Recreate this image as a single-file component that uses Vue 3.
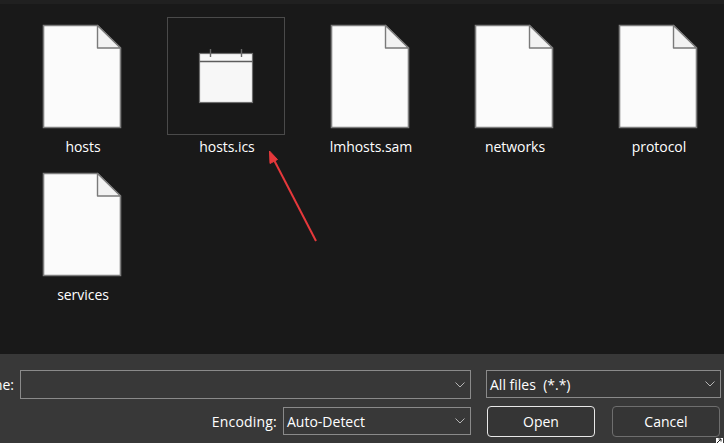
<script setup>
const files = [
  { name: 'hosts', kind: 'doc' },
  { name: 'hosts.ics', kind: 'cal', selected: true },
  { name: 'lmhosts.sam', kind: 'doc' },
  { name: 'networks', kind: 'doc' },
  { name: 'protocol', kind: 'doc' },
  { name: 'services', kind: 'doc' },
]
</script>

<template>
  <div class="dialog">
    <div class="topstrip"></div>
    <main class="grid">
      <div v-for="f in files" :key="f.name" class="item">
        <div class="thumb" :class="{ selected: f.selected }">
          <svg v-if="f.kind === 'doc'" width="80" height="105" viewBox="0 0 80 105">
            <path d="M1.500 1.500H55.500L78.500 24V103.500H1.500Z" fill="#fbfbfb" stroke="#7d7d7d" stroke-width="1.600" />
            <path d="M55.500 1.500V24H78.500Z" fill="#f2f2f2" stroke="#7a7a7a" stroke-width="1.400" stroke-linejoin="round" />
          </svg>
          <svg v-else width="56" height="56" viewBox="0 0 56 56">
            <rect x="1.500" y="5.500" width="53" height="49" fill="#f7f7f7" stroke="#6d6d6d" stroke-width="1.200" />
            <path d="M1.500 13.500H54.500" stroke="#5d5d5d" stroke-width="1.400" />
            <path d="M12.500 1V9M43.500 1V9" stroke="#666" stroke-width="1.400" />
          </svg>
        </div>
        <div class="label">{{ f.name }}</div>
      </div>
    </main>
    <footer class="footer">
      <div class="row first">
        <span class="caption">File name:</span>
        <div class="combo name">
          <svg class="chev" width="10" height="6" viewBox="0 0 10 6"><path d="M0.500 0.500L5 5L9.500 0.500" fill="none" stroke="#b5b5b5" /></svg>
        </div>
        <div class="combo type">
          <span>All files&nbsp; (*.*)</span>
          <svg class="chev" width="10" height="6" viewBox="0 0 10 6"><path d="M0.500 0.500L5 5L9.500 0.500" fill="none" stroke="#b5b5b5" /></svg>
        </div>
      </div>
      <div class="row second">
        <span class="caption">Encoding:</span>
        <div class="combo enc">
          <span>Auto-Detect</span>
          <svg class="chev" width="10" height="6" viewBox="0 0 10 6"><path d="M0.500 0.500L5 5L9.500 0.500" fill="none" stroke="#b5b5b5" /></svg>
        </div>
        <button class="btn primary">Open</button>
        <button class="btn">Cancel</button>
      </div>
    </footer>
    <svg class="arrow" width="724" height="443" viewBox="0 0 724 443">
      <path d="M316 241L274 160" stroke="#e5383b" stroke-width="2" fill="none" />
      <path d="M269.500 151L277.500 159.500L270 163.500Z" fill="#e5383b" stroke="#e5383b" />
    </svg>
    <svg class="grip" width="7" height="5" viewBox="0 0 7 5">
      <rect width="7" height="5" fill="#fff" />
      <path d="M1 5L5 1M2.500 1H5V3.500" fill="none" stroke="#222" />
    </svg>
  </div>
</template>

<style scoped>
.dialog {
  position: relative;
  width: 724px;
  height: 443px;
  overflow: hidden;
  display: flex;
  flex-direction: column;
  background: #191919;
  font-family: "Open Sans", "Noto Sans", sans-serif;
  font-size: 14px;
  color: #fff;
}
.topstrip { height: 4px; background: #202020; flex: none; }
.grid {
  flex: 1;
  display: grid;
  grid-template-columns: repeat(5, 118px);
  grid-auto-rows: 148px;
  column-gap: 26px;
  padding: 13px 0 0 23px;
}
.item { display: flex; flex-direction: column; align-items: center; }
.thumb {
  width: 118px;
  height: 118px;
  flex: none;
  display: flex;
  align-items: center;
  justify-content: center;
  border: 1px solid transparent;
  box-sizing: border-box;
}
.thumb.selected { border-color: #4a4a4a; }
.label { margin-top: 2px; line-height: 19px; text-align: center; white-space: nowrap; letter-spacing: -0.05px; padding-left: 2px; }
.footer {
  height: 89px;
  flex: none;
  box-sizing: border-box;
  background: #383838;
  padding-top: 16px;
  display: flex;
  flex-direction: column;
  overflow: hidden;
}
.row { display: flex; justify-content: flex-end; align-items: flex-start; flex: none; }
.first { height: 37px; padding-right: 3px; }
.second { padding-right: 4px; }
.caption { line-height: 29px; white-space: nowrap; flex: none; color: #fff; }
.first .caption { margin-right: 6px; }
.second .caption { margin-right: 6px; line-height: 29px; letter-spacing: 0.2px; }
.combo {
  box-sizing: border-box;
  border: 1px solid #8a8a8a;
  display: flex;
  align-items: center;
  justify-content: space-between;
  padding: 0 5px 0 3px;
  flex: none;
}
.name { width: 451px; height: 29px; margin-right: 15px; justify-content: flex-end; }
.type { width: 235px; height: 28px; background: #353535; }
.enc { width: 188px; height: 28px; margin-right: 16px; }
.chev { flex: none; }
.btn {
  box-sizing: border-box;
  width: 108px;
  height: 31px;
  margin-top: -1px;
  background: #353535;
  border: 1px solid #6e6e6e;
  border-radius: 4px;
  color: #fff;
  font: inherit;
  padding: 0;
}
.btn.primary { border-color: #e8e8e8; margin-right: 17px; }
.arrow { position: absolute; left: 0; top: 0; pointer-events: none; }
.grip { position: absolute; right: 1px; bottom: 0; }
</style>
